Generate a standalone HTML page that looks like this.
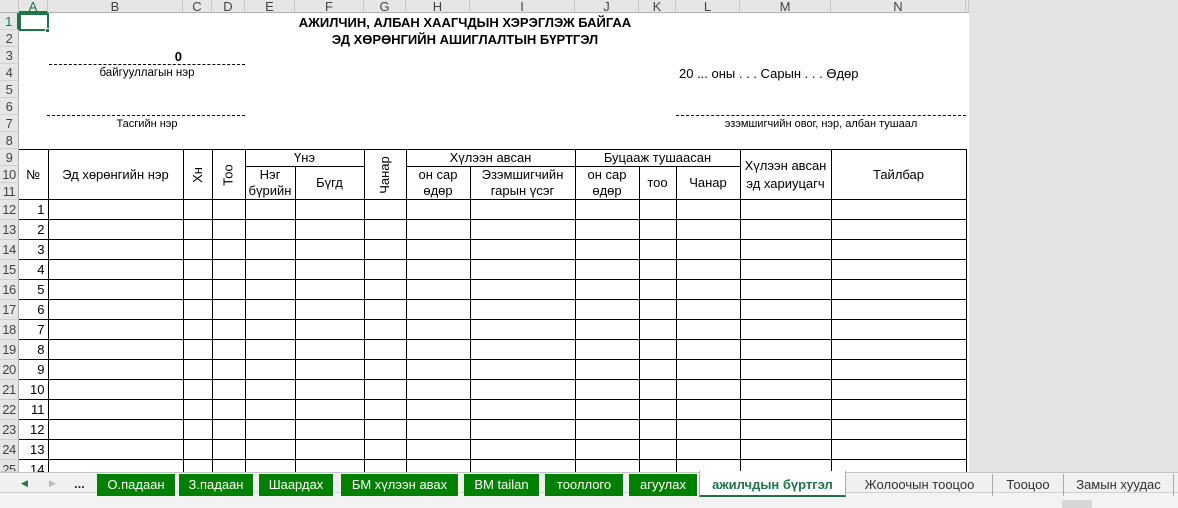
<!DOCTYPE html>
<html><head><meta charset="utf-8">
<style>
*{margin:0;padding:0;box-sizing:border-box}
body{width:1178px;height:508px;overflow:hidden;background:#fff;font-family:"Liberation Sans",Arial,sans-serif;font-size:13px;color:#000;position:relative}
.a{position:absolute}
.ch{position:absolute;top:0;height:13px;background:#e6e6e6;border-right:1px solid #c8c8c8;border-bottom:1px solid #b0b0b0;text-align:center;font-size:13px;line-height:13px;color:#444}
.rh{position:absolute;left:0;width:19px;background:#e6e6e6;border-bottom:1px solid #d0d0d0;border-right:1px solid #b0b0b0;text-align:center;font-size:13px;color:#444;letter-spacing:-0.5px}
table{position:absolute;left:19px;top:149px;border-collapse:collapse;table-layout:fixed}
td{border:1px solid #000;padding:0;text-align:center;vertical-align:middle;font-size:13px;line-height:17px;overflow:hidden;white-space:nowrap}
tr.h td{height:17px;line-height:16px}
tr.r td{height:20px}
tr.r td:first-child{text-align:right;padding-right:3px}
.v{display:inline-block;transform:rotate(-90deg);white-space:nowrap}
.tab{position:absolute;top:474px;height:22px;background:#008000;color:#fff;font-size:13px;line-height:22px;text-align:center}
.tb{position:absolute;top:474px;height:22px;color:#333;font-size:13px;line-height:22px;text-align:center;border-right:1px solid #aaa}
</style></head><body>
<div class="ch" style="left:0;width:19px;background:#e6e6e6"></div>
<div class="ch" style="left:19px;width:29px;border-bottom:2px solid #217346;color:#217346">A</div>
<div class="ch" style="left:48px;width:135px">B</div>
<div class="ch" style="left:183px;width:29px">C</div>
<div class="ch" style="left:212px;width:33px">D</div>
<div class="ch" style="left:245px;width:50px">E</div>
<div class="ch" style="left:295px;width:69px">F</div>
<div class="ch" style="left:364px;width:42px">G</div>
<div class="ch" style="left:406px;width:64px">H</div>
<div class="ch" style="left:470px;width:105px">I</div>
<div class="ch" style="left:575px;width:64px">J</div>
<div class="ch" style="left:639px;width:37px">K</div>
<div class="ch" style="left:676px;width:64px">L</div>
<div class="ch" style="left:740px;width:91px">M</div>
<div class="ch" style="left:831px;width:135px">N</div>
<div class="ch" style="left:966px;width:3px"></div>
<div class="a" style="left:969px;top:0;width:209px;height:472px;background:#e3e3e3"></div>
<div class="rh" style="top:13px;height:17px;line-height:17px;color:#217346;border-right:2px solid #217346">1</div>
<div class="rh" style="top:30px;height:17px;line-height:17px">2</div>
<div class="rh" style="top:47px;height:17px;line-height:17px">3</div>
<div class="rh" style="top:64px;height:17px;line-height:17px">4</div>
<div class="rh" style="top:81px;height:17px;line-height:17px">5</div>
<div class="rh" style="top:98px;height:17px;line-height:17px">6</div>
<div class="rh" style="top:115px;height:17px;line-height:17px">7</div>
<div class="rh" style="top:132px;height:17px;line-height:17px">8</div>
<div class="rh" style="top:149px;height:17px;line-height:17px">9</div>
<div class="rh" style="top:166px;height:17px;line-height:17px">10</div>
<div class="rh" style="top:183px;height:17px;line-height:17px">11</div>
<div class="rh" style="top:200px;height:20px;line-height:20px">12</div>
<div class="rh" style="top:220px;height:20px;line-height:20px">13</div>
<div class="rh" style="top:240px;height:20px;line-height:20px">14</div>
<div class="rh" style="top:260px;height:20px;line-height:20px">15</div>
<div class="rh" style="top:280px;height:20px;line-height:20px">16</div>
<div class="rh" style="top:300px;height:20px;line-height:20px">17</div>
<div class="rh" style="top:320px;height:20px;line-height:20px">18</div>
<div class="rh" style="top:340px;height:20px;line-height:20px">19</div>
<div class="rh" style="top:360px;height:20px;line-height:20px">20</div>
<div class="rh" style="top:380px;height:20px;line-height:20px">21</div>
<div class="rh" style="top:400px;height:20px;line-height:20px">22</div>
<div class="rh" style="top:420px;height:20px;line-height:20px">23</div>
<div class="rh" style="top:440px;height:20px;line-height:20px">24</div>
<div class="rh" style="top:460px;height:12px;line-height:20px;overflow:hidden">25</div>
<div class="a" style="left:19px;top:13px;width:30px;height:18px;border:2px solid #217346"></div>
<div class="a" style="left:45px;top:28px;width:5px;height:5px;background:#217346;border:1px solid #fff"></div>
<div class="a" style="left:245px;top:14px;width:440px;text-align:center;font-weight:bold;font-size:13px;line-height:17px">АЖИЛЧИН, АЛБАН ХААГЧДЫН ХЭРЭГЛЭЖ БАЙГАА</div>
<div class="a" style="left:245px;top:31px;width:440px;text-align:center;font-weight:bold;font-size:13px;line-height:17px">ЭД ХӨРӨНГИЙН АШИГЛАЛТЫН БҮРТГЭЛ</div>
<div class="a" style="left:48px;top:48px;width:134px;text-align:right;font-weight:bold;line-height:17px">0</div>
<div class="a" style="left:49px;top:64px;width:196px;border-top:1px dashed #000"></div>
<div class="a" style="left:48px;top:66px;width:198px;text-align:center;font-size:11.5px;line-height:15px">байгууллагын нэр</div>
<div class="a" style="left:47px;top:115px;width:198px;border-top:1px dashed #000"></div>
<div class="a" style="left:48px;top:117px;width:198px;text-align:center;font-size:11px;line-height:15px">Тасгийн нэр</div>
<div class="a" style="left:679px;top:65px;line-height:17px;font-size:13px">20 ... оны . . . Сарын . . . Өдөр</div>
<div class="a" style="left:676px;top:115px;width:290px;border-top:1px dashed #000"></div>
<div class="a" style="left:676px;top:117px;width:290px;text-align:center;font-size:11px;line-height:15px">эзэмшигчийн овог, нэр, албан тушаал</div>
<table>
<colgroup><col style="width:29px"><col style="width:135px"><col style="width:29px"><col style="width:33px"><col style="width:50px"><col style="width:69px"><col style="width:42px"><col style="width:64px"><col style="width:105px"><col style="width:64px"><col style="width:37px"><col style="width:64px"><col style="width:91px"><col style="width:135px"></colgroup>
<tr class="h"><td rowspan="3" style="border-left:none">№</td><td rowspan="3">Эд хөрөнгийн нэр</td><td rowspan="3"><span class="v">Хн</span></td><td rowspan="3"><span class="v">Тоо</span></td><td colspan="2">Үнэ</td><td rowspan="3"><span class="v">Чанар</span></td><td colspan="2">Хүлээн авсан</td><td colspan="3">Буцааж тушаасан</td><td rowspan="3" style="line-height:18px">Хүлээн авсан<br>эд хариуцагч</td><td rowspan="3">Тайлбар</td></tr>
<tr class="h"><td rowspan="2">Нэг<br>бүрийн</td><td rowspan="2">Бүгд</td><td rowspan="2">он сар<br>өдөр</td><td rowspan="2">Эзэмшигчийн<br>гарын үсэг</td><td rowspan="2">он сар<br>өдөр</td><td rowspan="2">тоо</td><td rowspan="2">Чанар</td></tr>
<tr class="h"></tr>
<tr class="r"><td style="border-left:none">1</td><td></td><td></td><td></td><td></td><td></td><td></td><td></td><td></td><td></td><td></td><td></td><td></td><td></td></tr>
<tr class="r"><td style="border-left:none">2</td><td></td><td></td><td></td><td></td><td></td><td></td><td></td><td></td><td></td><td></td><td></td><td></td><td></td></tr>
<tr class="r"><td style="border-left:none">3</td><td></td><td></td><td></td><td></td><td></td><td></td><td></td><td></td><td></td><td></td><td></td><td></td><td></td></tr>
<tr class="r"><td style="border-left:none">4</td><td></td><td></td><td></td><td></td><td></td><td></td><td></td><td></td><td></td><td></td><td></td><td></td><td></td></tr>
<tr class="r"><td style="border-left:none">5</td><td></td><td></td><td></td><td></td><td></td><td></td><td></td><td></td><td></td><td></td><td></td><td></td><td></td></tr>
<tr class="r"><td style="border-left:none">6</td><td></td><td></td><td></td><td></td><td></td><td></td><td></td><td></td><td></td><td></td><td></td><td></td><td></td></tr>
<tr class="r"><td style="border-left:none">7</td><td></td><td></td><td></td><td></td><td></td><td></td><td></td><td></td><td></td><td></td><td></td><td></td><td></td></tr>
<tr class="r"><td style="border-left:none">8</td><td></td><td></td><td></td><td></td><td></td><td></td><td></td><td></td><td></td><td></td><td></td><td></td><td></td></tr>
<tr class="r"><td style="border-left:none">9</td><td></td><td></td><td></td><td></td><td></td><td></td><td></td><td></td><td></td><td></td><td></td><td></td><td></td></tr>
<tr class="r"><td style="border-left:none">10</td><td></td><td></td><td></td><td></td><td></td><td></td><td></td><td></td><td></td><td></td><td></td><td></td><td></td></tr>
<tr class="r"><td style="border-left:none">11</td><td></td><td></td><td></td><td></td><td></td><td></td><td></td><td></td><td></td><td></td><td></td><td></td><td></td></tr>
<tr class="r"><td style="border-left:none">12</td><td></td><td></td><td></td><td></td><td></td><td></td><td></td><td></td><td></td><td></td><td></td><td></td><td></td></tr>
<tr class="r"><td style="border-left:none">13</td><td></td><td></td><td></td><td></td><td></td><td></td><td></td><td></td><td></td><td></td><td></td><td></td><td></td></tr>
<tr class="r"><td style="border-left:none">14</td><td></td><td></td><td></td><td></td><td></td><td></td><td></td><td></td><td></td><td></td><td></td><td></td><td></td></tr>
</table>
<div class="a" style="left:0;top:472px;width:1178px;height:20px;background:#f0f0f0;border-top:1px solid #c6c6c6"></div>
<div class="a" style="left:0;top:492px;width:1178px;height:16px;background:#f3f3f3;border-top:1px solid #d0d0d0"></div>
<div class="a" style="left:21px;top:478px;font-size:9px;color:#217346">◀</div>
<div class="a" style="left:49px;top:478px;font-size:9px;color:#bbb">▶</div>
<div class="a" style="left:74px;top:476px;font-weight:bold;color:#333">...</div>
<div class="tab" style="left:97px;width:78px">О.падаан</div>
<div class="tab" style="left:179px;width:74px">З.падаан</div>
<div class="tab" style="left:259px;width:74px">Шаардах</div>
<div class="tab" style="left:341px;width:117px">БМ хүлээн авах</div>
<div class="tab" style="left:464px;width:75px">BM tailan</div>
<div class="tab" style="left:545px;width:78px">тооллого</div>
<div class="tab" style="left:629px;width:68px">агуулах</div>
<div class="a" style="left:699px;top:471px;width:147px;height:26px;background:#fff;border:1px solid #aaa;border-top:none;border-bottom:2px solid #217346;color:#217346;font-weight:bold;font-size:13px;line-height:27px;text-align:center">ажилчдын бүртгэл</div>
<div class="tb" style="left:847px;width:146px">Жолоочын тооцоо</div>
<div class="tb" style="left:993px;width:71px">Тооцоо</div>
<div class="tb" style="left:1064px;width:110px">Замын хуудас</div>
<div class="a" style="left:1062px;top:500px;width:30px;height:8px;background:#d6d6d6"></div>
</body></html>
